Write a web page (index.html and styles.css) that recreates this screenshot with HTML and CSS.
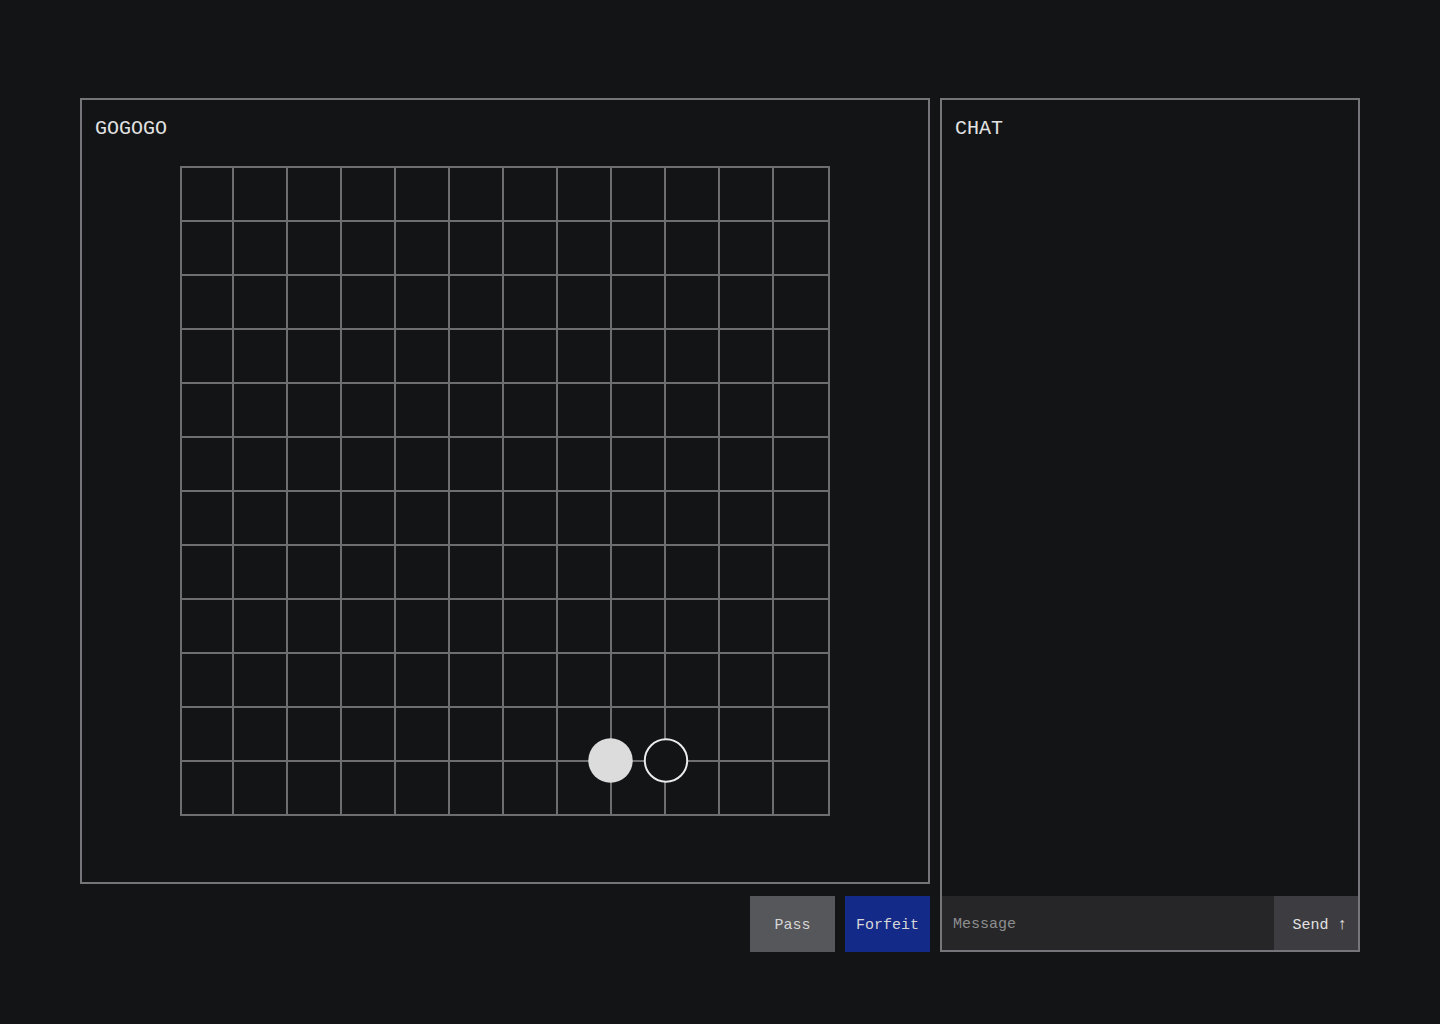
FILE: index.html
```html
<!DOCTYPE html>
<html lang="en">
<head>
<meta charset="utf-8">
<title>GOGOGO</title>
<link rel="stylesheet" href="styles.css">
</head>
<body>
<main class="app">
  <section class="game">
    <div class="panel board-panel">
      <h1 class="panel-title">GOGOGO</h1>
      <div class="board-wrap">
        <svg class="board" width="650" height="650" viewBox="0 0 650 650" xmlns="http://www.w3.org/2000/svg">
          <g stroke="#6e6e70" stroke-width="2">
            <line x1="1" y1="0" x2="1" y2="650"/>
            <line x1="53" y1="0" x2="53" y2="650"/>
            <line x1="107" y1="0" x2="107" y2="650"/>
            <line x1="161" y1="0" x2="161" y2="650"/>
            <line x1="215" y1="0" x2="215" y2="650"/>
            <line x1="269" y1="0" x2="269" y2="650"/>
            <line x1="323" y1="0" x2="323" y2="650"/>
            <line x1="377" y1="0" x2="377" y2="650"/>
            <line x1="431" y1="0" x2="431" y2="650"/>
            <line x1="485" y1="0" x2="485" y2="650"/>
            <line x1="539" y1="0" x2="539" y2="650"/>
            <line x1="593" y1="0" x2="593" y2="650"/>
            <line x1="649" y1="0" x2="649" y2="650"/>
            <line x1="0" y1="1" x2="650" y2="1"/>
            <line x1="0" y1="55" x2="650" y2="55"/>
            <line x1="0" y1="109" x2="650" y2="109"/>
            <line x1="0" y1="163" x2="650" y2="163"/>
            <line x1="0" y1="217" x2="650" y2="217"/>
            <line x1="0" y1="271" x2="650" y2="271"/>
            <line x1="0" y1="325" x2="650" y2="325"/>
            <line x1="0" y1="379" x2="650" y2="379"/>
            <line x1="0" y1="433" x2="650" y2="433"/>
            <line x1="0" y1="487" x2="650" y2="487"/>
            <line x1="0" y1="541" x2="650" y2="541"/>
            <line x1="0" y1="595" x2="650" y2="595"/>
            <line x1="0" y1="649" x2="650" y2="649"/>
          </g>
          <circle cx="430.5" cy="594.5" r="22.2" fill="#dcdcdc"/>
          <circle cx="486" cy="594.5" r="21.2" fill="#131416" stroke="#ececec" stroke-width="2"/>
        </svg>
      </div>
    </div>
    <div class="actions">
      <button class="btn btn-pass" type="button">Pass</button>
      <button class="btn btn-forfeit" type="button">Forfeit</button>
    </div>
  </section>
  <aside class="panel chat-panel">
    <h2 class="panel-title">CHAT</h2>
    <div class="chat-log"></div>
    <form class="chat-form">
      <input class="chat-input" type="text" placeholder="Message">
      <button class="btn btn-send" type="button">Send<span class="arrow">↑</span></button>
    </form>
  </aside>
</main>
</body>
</html>
```

FILE: styles.css
```css
* {
  box-sizing: border-box;
}

html, body {
  margin: 0;
  padding: 0;
  background: #131416;
  color: #e0e0e0;
  font-family: "Liberation Mono", "DejaVu Sans Mono", monospace;
}

body {
  width: 1440px;
  height: 1024px;
}

.app {
  display: flex;
  gap: 10px;
  padding: 98px 80px 0 80px;
}

.game {
  width: 850px;
  display: flex;
  flex-direction: column;
  gap: 12px;
}

.panel {
  border: 2px solid #76767a;
  background: #131416;
}

.board-panel {
  height: 786px;
  padding: 15px 12px 0 13px;
}

.panel-title {
  margin: 0;
  font-size: 20px;
  font-weight: 400;
  line-height: 28px;
  color: #e2e2e2;
  letter-spacing: 0;
}

.board-wrap {
  display: flex;
  justify-content: center;
  margin-top: 23px;
  padding-right: 1px;
}

.board {
  display: block;
}

.actions {
  display: flex;
  justify-content: flex-end;
  gap: 10px;
}

.btn {
  border: none;
  font-family: "Liberation Mono", "DejaVu Sans Mono", monospace;
  font-size: 15px;
  color: #d6d6d6;
  cursor: pointer;
}

.btn-pass,
.btn-forfeit {
  width: 85px;
  height: 56px;
  padding-top: 4px;
}

.btn-pass {
  background: #56575b;
}

.btn-forfeit {
  background: #142a89;
}

.chat-panel {
  width: 420px;
  height: 854px;
  display: flex;
  flex-direction: column;
  padding-top: 15px;
}

.chat-panel .panel-title {
  padding-left: 13px;
}

.chat-log {
  flex: 1;
}

.chat-form {
  display: flex;
  height: 54px;
  margin: 0;
}

.chat-input {
  flex: 1;
  min-width: 0;
  height: 54px;
  border: none;
  outline: none;
  background: #262628;
  color: #e0e0e0;
  font-family: "Liberation Mono", "DejaVu Sans Mono", monospace;
  font-size: 15px;
  padding: 3px 11px 0 11px;
}

.chat-input::placeholder {
  color: #8e8e90;
}

.btn-send {
  width: 84px;
  height: 54px;
  background: #3d3d41;
  color: #e2e2e2;
  padding: 3px 11px 0 0;
  text-align: right;
}

.arrow {
  margin-left: 9px;
  font-size: 16px;
}
```
